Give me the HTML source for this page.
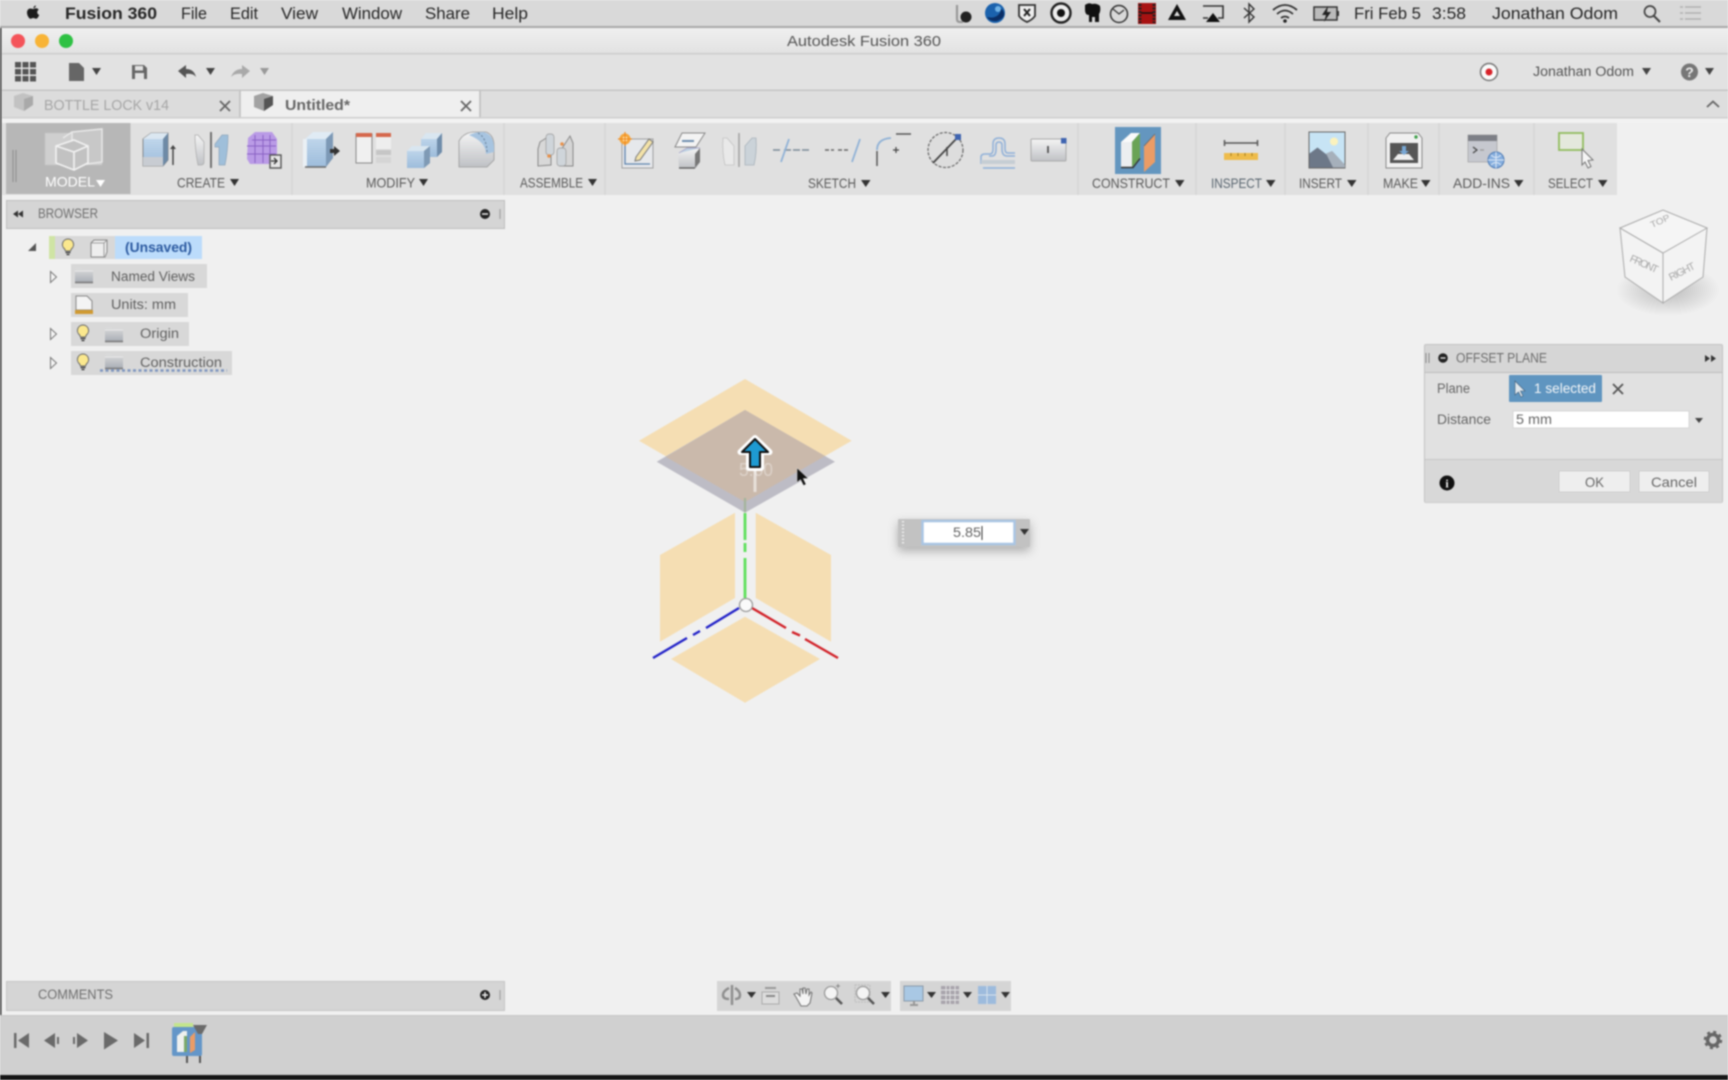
<!DOCTYPE html>
<html><head><meta charset="utf-8"><title>Autodesk Fusion 360</title>
<style>
html,body{margin:0;padding:0;background:#f0f0f0;width:1728px;height:1080px;overflow:hidden}
svg{display:block;position:absolute;left:0;top:0;filter:blur(.7px);font-family:"Liberation Sans",sans-serif}
</style></head><body>
<svg width="1728" height="1080" viewBox="0 0 1728 1080" xmlns="http://www.w3.org/2000/svg">
<defs>
<linearGradient id="bl" x1="0" y1="0" x2="0" y2="1"><stop offset="0" stop-color="#c6dbee"/><stop offset="1" stop-color="#9dbcdb"/></linearGradient>
<linearGradient id="gr" x1="0" y1="0" x2="0" y2="1"><stop offset="0" stop-color="#f4f4f4"/><stop offset="1" stop-color="#bfc1c5"/></linearGradient>
<linearGradient id="fg" x1="0" y1="0" x2="0" y2="1"><stop offset="0" stop-color="#dcdcdc"/><stop offset="1" stop-color="#a6abb3"/></linearGradient>
<linearGradient id="tb" x1="0" y1="0" x2="0" y2="1"><stop offset="0" stop-color="#efefef"/><stop offset="1" stop-color="#e2e2e2"/></linearGradient>
<radialGradient id="cs"><stop offset="0" stop-color="#000" stop-opacity=".22"/><stop offset="1" stop-color="#000" stop-opacity="0"/></radialGradient>
<filter id="sh" x="-20%" y="-30%" width="140%" height="180%"><feDropShadow dx="0" dy="4" stdDeviation="5" flood-color="#000" flood-opacity=".28"/></filter>
<g id="bulb"><path d="M0-8a5.500 5.500 0 0 1 3.500 9.800L2.500 4h-5l-1-2.200A5.500 5.500 0 0 1 0-8z" fill="#fbe88e" stroke="#666" stroke-width="1"/><path d="M-2.500 5.500h5M-1.500 7.500h3" stroke="#333" stroke-width="1.300"/></g>
<g id="fold"><path d="M0 2h7l2 2h9v13H0z" fill="url(#fg)"/><path d="M0 16.500h18" stroke="#777" stroke-width="1.500"/><path d="M0 5h18" stroke="#f2f2f2" stroke-width=".8"/></g>
</defs>

<!-- window base -->
<rect width="1728" height="1080" fill="#f0f0f0"/>
<rect x="0" y="0" width="1.500" height="1080" fill="#333"/>
<!-- menu bar -->
<rect width="1728" height="27" fill="#d9d9d9"/>
<rect y="26" width="1728" height="2" fill="#a9a9a9"/>
<path d="M36 5.500c-.3 1.500-1.300 2.600-2.700 2.700.1-1.400 1.200-2.500 2.700-2.700zM33 9c1 0 1.700-.7 3-.7 1.100 0 2.100.6 2.700 1.500-2.200 1.300-1.800 4.300.5 5.200-.7 1.700-1.800 3.700-3.100 3.700-1.100 0-1.500-.7-2.800-.7s-1.800.7-2.800.7c-1.500 0-3.500-3.400-3.500-6.100 0-2.700 1.800-4.100 3.400-4.100 1 0 1.900.5 2.600.5z" fill="#1c1c1c"/>
<g fill="#262626" font-size="17">
<text x="65" y="19" font-weight="700" textLength="92" lengthAdjust="spacingAndGlyphs">Fusion 360</text>
<text x="181" y="19" textLength="26" lengthAdjust="spacingAndGlyphs">File</text>
<text x="230" y="19" textLength="28" lengthAdjust="spacingAndGlyphs">Edit</text>
<text x="281" y="19" textLength="37" lengthAdjust="spacingAndGlyphs">View</text>
<text x="342" y="19" textLength="60" lengthAdjust="spacingAndGlyphs">Window</text>
<text x="425" y="19" textLength="45" lengthAdjust="spacingAndGlyphs">Share</text>
<text x="492" y="19" textLength="36" lengthAdjust="spacingAndGlyphs">Help</text>
<text x="1354" y="19" textLength="67" lengthAdjust="spacingAndGlyphs">Fri Feb 5</text>
<text x="1432" y="19" textLength="34" lengthAdjust="spacingAndGlyphs">3:58</text>
<text x="1492" y="19" textLength="126" lengthAdjust="spacingAndGlyphs">Jonathan Odom</text>
</g>
<!-- status icons -->
<path d="M957 5v14q0 3 3 3h3" fill="none" stroke="#999" stroke-width="2.200"/><circle cx="966" cy="17" r="5.500" fill="#222"/>
<circle cx="995" cy="13" r="10" fill="#1b62ad"/><path d="M987 17q8 2 12-3t-3-7q7 1 8 6t-7 8q-7 1-10-4z" fill="#0b2f66"/><circle cx="998" cy="9" r="3" fill="#6fb2e6"/>
<path d="M1019 5h16v11q-3 4-8 6-5-2-8-6z" fill="#eee" stroke="#333" stroke-width="1.800"/><path d="M1024 9l6 7m0-7l-6 7" stroke="#222" stroke-width="2"/>
<circle cx="1061" cy="13" r="9.500" fill="#eee" stroke="#222" stroke-width="2.400"/><circle cx="1061" cy="13" r="4" fill="#111"/>
<path d="M1085 5q4-3 7-1 5-1 8 2 1 5-1 8v8h-4v-5h-3v5h-3v-7q-4 0-4-5z" fill="#111"/>
<circle cx="1119" cy="14" r="8.500" fill="none" stroke="#333" stroke-width="1.500"/><path d="M1113 9l6 5 5-4" fill="none" stroke="#333" stroke-width="1.200"/>
<rect x="1138" y="3" width="18" height="21" fill="#a81212"/><path d="M1140 4v19M1154 4v19" stroke="#222" stroke-width="3" stroke-dasharray="2 1.500"/><path d="M1141 13h12" stroke="#111" stroke-width="1.500"/>
<path d="M1177 4l9 16h-18z" fill="#111"/><path d="M1177 11l3 5h-6z" fill="#ddd"/>
<path d="M1203 6h20v12h-5m-10 0h-5z" fill="none" stroke="#333" stroke-width="1.600"/><path d="M1213 13l7 9h-14z" fill="#111"/>
<path d="M1244 8l10 9-5 5V4l5 5-10 9" fill="none" stroke="#333" stroke-width="1.400"/>
<g fill="none" stroke="#333" stroke-width="1.800"><path d="M1273 10q12-10 24 0"/><path d="M1277 14q8-7 16 0"/><path d="M1281 18q4-3 8 0"/></g><circle cx="1285" cy="21" r="1.800" fill="#222"/>
<rect x="1314" y="7" width="23" height="13" fill="#bbb" stroke="#333" stroke-width="1.500"/><path d="M1338 11v5" stroke="#333" stroke-width="2"/><path d="M1328 6l-6 9h4l-2 7 7-10h-4z" fill="#222"/>
<circle cx="1650" cy="11.500" r="5.500" fill="none" stroke="#444" stroke-width="1.700"/><path d="M1654 16l6 6" stroke="#444" stroke-width="2"/>
<g stroke="#b5b5b5" stroke-width="1.800"><path d="M1685 7h16M1685 13h16M1685 19h16M1680 7h3M1680 13h3M1680 19h3"/></g>

<!-- title bar -->
<rect x="2" y="28" width="1726" height="25" fill="url(#tb)"/>
<rect x="2" y="53" width="1726" height="1.500" fill="#cdcdcd"/>
<circle cx="18" cy="41" r="7" fill="#f4545a"/><circle cx="42" cy="41" r="7" fill="#f8b437"/><circle cx="66" cy="41" r="7" fill="#2ec143"/>
<text x="787" y="46" font-size="15" fill="#555" textLength="154" lengthAdjust="spacingAndGlyphs">Autodesk Fusion 360</text>

<!-- toolbar -->
<rect x="2" y="54.500" width="1726" height="35.500" fill="#e2e2e2"/>
<rect x="2" y="89.500" width="1726" height="1.500" fill="#c4c4c4"/>
<g fill="#555"><rect x="15" y="62" width="6" height="5.500"/><rect x="22.500" y="62" width="6" height="5.500"/><rect x="30" y="62" width="6" height="5.500"/><rect x="15" y="69" width="6" height="5.500"/><rect x="22.500" y="69" width="6" height="5.500"/><rect x="30" y="69" width="6" height="5.500"/><rect x="15" y="76" width="6" height="5.500"/><rect x="22.500" y="76" width="6" height="5.500"/><rect x="30" y="76" width="6" height="5.500"/></g>
<path d="M69 63h10l5 5v13H69z" fill="#666"/><path d="M92 68h9l-4.500 7z" fill="#444"/>
<path d="M132 65h12l3 3v11h-15z" fill="#666"/><rect x="135" y="66" width="8" height="4.500" fill="#e2e2e2"/><rect x="135" y="73" width="9" height="6" fill="#e2e2e2"/>
<path d="M178 71l8-6v4q8 0 10 8-3-4-10-3v4z" fill="#555"/><path d="M206 68h9l-4.500 7z" fill="#444"/>
<path d="M250 71l-8-6v4q-8 0-11 8 4-4 11-3v4z" fill="#a9a9a9"/><path d="M260 68h9l-4.500 7z" fill="#999"/>
<circle cx="1489" cy="72" r="8.500" fill="#fafafa" stroke="#777" stroke-width="1.500"/><circle cx="1489" cy="72" r="3.500" fill="#d8232a"/>
<text x="1533" y="76" font-size="13.500" fill="#555" textLength="101" lengthAdjust="spacingAndGlyphs">Jonathan Odom</text>
<path d="M1642 68h9l-4.500 7z" fill="#444"/>
<circle cx="1689.500" cy="72" r="8.500" fill="#777"/><text x="1689.500" y="77" font-size="14" font-weight="700" fill="#eee" text-anchor="middle">?</text>
<path d="M1705 68h9l-4.500 7z" fill="#444"/>

<!-- tab row -->
<rect x="2" y="91" width="1726" height="26" fill="#dedede"/>
<rect x="2" y="91" width="238" height="26" fill="#dcdcdc"/>
<rect x="240" y="91" width="240" height="26" fill="#efefef"/>
<path d="M240 91v26M480 91v26" stroke="#bdbdbd" stroke-width="1.500"/>
<path d="M14 96l9-3 10 3v9l-9 6-10-4z" fill="#c2c2c2"/><path d="M24 99l9-3v9l-9 6z" fill="#a9a9a9"/>
<path d="M254 96l9-3 10 3v9l-9 6-10-4z" fill="#a2a2a2"/><path d="M264 99l9-3v9l-9 6z" fill="#555"/>
<text x="44" y="110" font-size="15" fill="#a6a6a6" textLength="125" lengthAdjust="spacingAndGlyphs">BOTTLE LOCK v14</text>
<text x="285" y="110" font-size="15" fill="#666" font-weight="700" textLength="65" lengthAdjust="spacingAndGlyphs">Untitled*</text>
<path d="M220 101l10 10m0-10l-10 10" stroke="#666" stroke-width="1.800"/>
<path d="M461 101l10 10m0-10l-10 10" stroke="#666" stroke-width="1.800"/>
<path d="M1707 107l6-5.500 6 5.500" fill="none" stroke="#666" stroke-width="1.800"/>
<rect x="2" y="117" width="1726" height="1.500" fill="#cfcfcf"/>
<rect x="2" y="118.500" width="1726" height="4.500" fill="#f2f2f2"/>

<!-- ribbon -->
<rect x="2" y="123" width="1615" height="72" fill="#e0e0e0"/>
<rect x="6" y="123" width="124.500" height="71" fill="#b7b7b7"/>
<path d="M13 150v32M16 150v32" stroke="#8c8c8c" stroke-width="1"/>
<path d="M292 123v72M504 123v72M605 123v72M1078 123v72M1196 123v72M1285 123v72M1368 123v72M1439 123v72M1534 123v72" stroke="#d3d3d3" stroke-width="1.200"/>
<!-- model -->
<path d="M45 133h57v32H45z" fill="#cfcfcf"/>
<path d="M72 132l30-3v33l-30 4zM72 132l-9 6" fill="#c8c8c8" stroke="#e8e8e8" stroke-width="1.500"/>
<path d="M56 146l18-6 14 6v17l-14 7-18-7z" fill="#c2c2c2" stroke="#f2f2f2" stroke-width="1.600"/><path d="M56 146l18 6 14-6M74 152v18" fill="none" stroke="#f2f2f2" stroke-width="1.600"/>
<text x="45" y="186.500" font-size="14" fill="#fff" textLength="50" lengthAdjust="spacingAndGlyphs">MODEL</text><path d="M96 180h9l-4.500 7z" fill="#fff"/>

<!-- create icons -->
<path d="M143 139l8-6h17v27l-5 6h-20z" fill="url(#bl)" stroke="#777" stroke-width=".8"/><path d="M143 139h20l5-6h-17z" fill="#dbe7f1"/><path d="M163 139v27l5-6v-27z" fill="#6e8aa6"/><rect x="143" y="157" width="20" height="9" fill="#c8ccd2"/>
<path d="M173 147v18" stroke="#444" stroke-width="1.500"/><path d="M170 149l3-4 3 4z" fill="#444"/>
<path d="M195 135h3l6 7v20q0 3-3 3h-3q-3-15-3-30z" fill="url(#gr)" stroke="#aaa" stroke-width=".7"/>
<path d="M211 132v36" stroke="#666" stroke-width="1.800"/>
<path d="M228 135h-6l-7 9v3h4v18h6q3-15 3-30z" fill="#9fbfda" stroke="#8ea5bb" stroke-width=".7"/>
<path d="M248 138l7-6h17l5 7v20l-5 5h-22l-3-5z" fill="#ba9be6"/><path d="M247 146h29M247 154h29M255 135v28M263 135v28M270 135v28M252 140h24" stroke="#8a62c4" stroke-width="1"/>
<rect x="270" y="155" width="11" height="13" fill="#e6e6e6" stroke="#555" stroke-width="1.400"/><path d="M271 161h5m-2-3l3 3-3 3" fill="none" stroke="#333" stroke-width="1.300"/>
<text x="177" y="187.500" font-size="14" fill="#5a5a5a" textLength="48" lengthAdjust="spacingAndGlyphs">CREATE</text><path d="M230 179h9l-4.500 7z" fill="#333"/>
<!-- modify -->
<path d="M305 139l8-7h20v25l-7 10h-21z" fill="url(#bl)"/><path d="M305 139h21l7-7h-20z" fill="#e0ebf4"/><path d="M326 139v28l7-9v-26z" fill="#7d99b6"/><path d="M305 139v28" stroke="#eaf0f5" stroke-width="4"/><path d="M305 167h21" stroke="#666" stroke-width="1.500"/>
<path d="M330 149h4v-3l6 5-6 5v-3h-4z" fill="#333"/>
<rect x="356" y="134" width="16" height="29" fill="#f0f0f0" stroke="#888" stroke-width="1"/><rect x="356" y="133" width="16" height="4" fill="#d5684c"/>
<rect x="376" y="134" width="15" height="15" fill="#eee"/><rect x="376" y="133" width="15" height="4" fill="#d5684c"/><rect x="376" y="150" width="15" height="5" fill="#c6c6c6"/><rect x="376" y="157" width="15" height="6" fill="#d5d5d5"/>
<path d="M421 139l5-6h16v19l-5 5h-16z" fill="url(#bl)"/><path d="M421 139h16l5-6h-16z" fill="#d9e6f0"/><path d="M437 139v18l5-5v-19z" fill="#6f8caa"/>
<path d="M407 151l5-5h18v17l-6 5h-17z" fill="url(#bl)"/><path d="M407 151h17l6-5h-18z" fill="#d9e6f0"/><path d="M424 151v17l6-5v-17z" fill="#7f9ab5"/>
<path d="M459 141q5-9 16-9h11q8 3 8 14v14l-7 7h-28v-26z" fill="url(#gr)" stroke="#9a9a9a" stroke-width=".8"/>
<path d="M469 135q6-3 14-3 10 2 11 14v6l-8 2q0-12-17-19z" fill="#a7c4e0"/><path d="M478 133q9 5 9 20" fill="none" stroke="#667e97" stroke-width="1" stroke-dasharray="2 2"/>
<text x="366" y="187.500" font-size="14" fill="#5a5a5a" textLength="49" lengthAdjust="spacingAndGlyphs">MODIFY</text><path d="M419 179h9l-4.500 7z" fill="#333"/>
<!-- assemble -->
<path d="M540 142l11-7v30l-13 1v-17z" fill="#d8d8d8" stroke="#888" stroke-width="1"/><rect x="546" y="134" width="8" height="21" rx="3" fill="#cfd5da" stroke="#999" stroke-width=".7"/>
<path d="M561 150l9-14 3 7v23h-13z" fill="#d5d5d5" stroke="#888" stroke-width="1"/><rect x="557" y="148" width="9" height="18" rx="3" fill="#cfd5da" stroke="#999" stroke-width=".7"/>
<circle cx="549" cy="156" r="1.800" fill="#e8914a"/><circle cx="562" cy="144" r="1.800" fill="#e8914a"/>
<text x="520" y="187.500" font-size="14" fill="#5a5a5a" textLength="63" lengthAdjust="spacingAndGlyphs">ASSEMBLE</text><path d="M588 179h9l-4.500 7z" fill="#333"/>
<!-- sketch -->
<rect x="622" y="139" width="31" height="29" fill="#e6e8eb" stroke="#a0a0a0" stroke-width="1"/><path d="M625 143v21h25" fill="none" stroke="#5c82ad" stroke-width="1.300"/>
<circle cx="625" cy="139" r="5.500" fill="#f6a53a"/><circle cx="625" cy="139" r="2.500" fill="#fff3c8"/><path d="M625 132v14M618 139h14" stroke="#f08a1f" stroke-width="1.200"/>
<path d="M636 157l13-18 4 3-13 18-5 1z" fill="#f3e2a8" stroke="#777" stroke-width="1"/>
<path d="M675 147l7-14h23l-9 14z" fill="#f3f3f3" stroke="#888" stroke-width="1"/><path d="M682 141h12" stroke="#6e8eae" stroke-width="2"/>
<path d="M678 154l8-6h14v14l-4 6h-17z" fill="url(#gr)"/><path d="M679 153l8-5h13" fill="#bcd1e3" stroke="#aac"/><path d="M695 154v14l5-6v-14z" fill="#777"/><path d="M679 168h16" stroke="#555" stroke-width="1.300"/>
<path d="M723 138h4l7 8v19h-9q-3-13-2-27z" fill="#e9e9e9" stroke="#c2c2c2" stroke-width=".8"/><path d="M739 133v34" stroke="#a4a4a4" stroke-width="1.600"/><path d="M756 138h-4l-7 8v19h9q3-13 2-27z" fill="#cbd3d9" stroke="#a9b3bb" stroke-width=".8"/>
<path d="M773 150h7M784 150h26" stroke="#7b8a97" stroke-width="1.400" stroke-dasharray="7 2"/><path d="M781 162l8-23" stroke="#8fb1d6" stroke-width="1.800"/>
<path d="M825 150h9M838 150h11" stroke="#666" stroke-width="1.400" stroke-dasharray="4 2"/><path d="M852 162l8-23" stroke="#8fb1d6" stroke-width="1.800"/>
<path d="M877 166v-15" stroke="#555" stroke-width="1.500"/><path d="M877 150q0-11 14-12" fill="none" stroke="#8fb1d6" stroke-width="1.800"/><path d="M896 134h15" stroke="#555" stroke-width="1.500"/><path d="M893 150h6M896 147v6" stroke="#444" stroke-width="1.200"/>
<circle cx="945.500" cy="150" r="17.500" fill="#ddd" stroke="#666" stroke-width="1.200" stroke-dasharray="3 1.500"/><path d="M933 163l25-26" stroke="#444" stroke-width="1.800"/><path d="M947 147v9" stroke="#444" stroke-width="1.500"/><rect x="955" y="134" width="6" height="6" fill="#3f64b0"/>
<path d="M981 164v-7q0-3 4-3h5q3 0 3-5v-5q0-6 6-6t6 6v5q0 4 3 4h7M983 168h32M989 156h3q4 0 4-7v-4q0-3 3-3t3 3v4q0 7 5 7h8" fill="none" stroke="#8fb0d8" stroke-width="1.500"/><path d="M981 160h34v4h-34z" fill="#c6cdd4"/>
<rect x="1031" y="139" width="35" height="22" rx="1" fill="url(#gr)" stroke="#aaa" stroke-width="1"/><path d="M1048 146v7" stroke="#444" stroke-width="1.600"/><rect x="1061" y="138" width="5.500" height="5.500" fill="#3f64b0"/>
<text x="808" y="188" font-size="14" fill="#5a5a5a" textLength="48" lengthAdjust="spacingAndGlyphs">SKETCH</text><path d="M861 180h9.500l-4.750 7z" fill="#333"/>
<!-- construct -->
<rect x="1115" y="127" width="46" height="47" fill="#6496bf"/>
<path d="M1121 142v25h11v-25z" fill="#eceef0"/><path d="M1121 142l10-9h9l-8 9z" fill="#fafafa"/><path d="M1132 142l8-9v25l-8 9z" fill="#6aa356"/><path d="M1121 167.500h12l7-9" fill="none" stroke="#333" stroke-width="1.400"/>
<path d="M1144 146l11-12v28l-11 10z" fill="#eb9c66"/><path d="M1144 146l11-12" stroke="#666" stroke-width=".8"/>
<text x="1092" y="188" font-size="14" fill="#5a5a5a" textLength="78" lengthAdjust="spacingAndGlyphs">CONSTRUCT</text><path d="M1175 180h9.500l-4.750 7z" fill="#333"/>
<!-- inspect -->
<path d="M1224 143h34M1224.500 140v6M1257.500 140v6" stroke="#555" stroke-width="1.500"/>
<rect x="1224" y="153" width="34" height="7" fill="#eebc4b"/><path d="M1231 153v3M1238 153v3M1245 153v3M1252 153v3" stroke="#a27e20"/>
<text x="1211" y="188" font-size="14" fill="#5a6670" textLength="51" lengthAdjust="spacingAndGlyphs">INSPECT</text><path d="M1266 180h9.500l-4.750 7z" fill="#333"/>
<!-- insert -->
<rect x="1309" y="132" width="36" height="36" fill="#c7e4f5" stroke="#666" stroke-width="1"/><circle cx="1334" cy="141.500" r="4" fill="#fbf2bd"/>
<path d="M1309.500 167.500v-14l8-6 9 7 6-3 12 13v3z" fill="#6d7888"/><path d="M1332 151l13 14v2.500h-12l-7-14z" fill="#a6b0bb"/>
<text x="1299" y="188" font-size="14" fill="#5a5a5a" textLength="43" lengthAdjust="spacingAndGlyphs">INSERT</text><path d="M1347 180h9.500l-4.750 7z" fill="#333"/>
<!-- make -->
<path d="M1386 138l4-5h28l4 5v30h-36z" fill="#f0f0f0" stroke="#888" stroke-width="1"/><rect x="1390" y="143" width="28" height="20" fill="#555"/><path d="M1393 160l5-6h11l5 6z" fill="#eee"/><path d="M1402 146h4v5h3l-5 4-5-4h3z" fill="#78a7d4"/><circle cx="1416" cy="137" r="1.700" fill="#3f9f4a"/>
<text x="1383" y="188" font-size="14" fill="#5a5a5a" textLength="35" lengthAdjust="spacingAndGlyphs">MAKE</text><path d="M1421 180h9.500l-4.750 7z" fill="#333"/>
<!-- add-ins -->
<rect x="1468" y="135" width="29" height="27" fill="#c6c8cf" stroke="#999" stroke-width=".6"/><rect x="1468" y="135" width="29" height="6" fill="#7d7f86"/><path d="M1473 147l4 3-4 3" fill="none" stroke="#444" stroke-width="1.200"/><path d="M1480 150h4" stroke="#999" stroke-width="1.300"/>
<circle cx="1496" cy="160" r="8" fill="#86aede" stroke="#4f7cb5" stroke-width="1"/><path d="M1496 152v16M1488 160h16M1491 155q5 5 10 0M1491 165q5-5 10 0" stroke="#dee9f6" fill="none" stroke-width="1"/>
<text x="1453" y="188" font-size="14" fill="#5a5a5a" textLength="57" lengthAdjust="spacingAndGlyphs">ADD-INS</text><path d="M1514 180h9.500l-4.750 7z" fill="#333"/>
<!-- select -->
<rect x="1559" y="133" width="24" height="17" fill="#e4e8dc" stroke="#92bc5f" stroke-width="1.800"/>
<path d="M1582 149l11 11-5 .5 3 6-3 1.500-3-6-3 3z" fill="#f5f5f5" stroke="#777" stroke-width="1"/>
<text x="1548" y="188" font-size="14" fill="#5a5a5a" textLength="45" lengthAdjust="spacingAndGlyphs">SELECT</text><path d="M1598 180h9.500l-4.750 7z" fill="#333"/>

<!-- view cube -->
<ellipse cx="1668" cy="290" rx="52" ry="26" fill="url(#cs)"/>
<path d="M1663 210l44 18-4 49-40 26-38-26-5-49z" fill="#f3f3f3"/>
<path d="M1620 228l43-18 44 18-44 25z" fill="#f5f5f5" stroke="#aaa" stroke-width="1"/>
<path d="M1620 228l5 49 38 26v-50zM1707 228l-4 49-40 26" fill="none" stroke="#aaa" stroke-width="1"/>
<g fill="#a8a8a8" font-size="10.500">
<text transform="translate(1652 228) rotate(-24) scale(1 .9)" font-size="10">TOP</text>
<text transform="translate(1629 261) rotate(24)" textLength="30">FRONT</text>
<text transform="translate(1671 281) rotate(-27)" textLength="28">RIGHT</text>
</g>

<!-- browser -->
<rect x="6.500" y="200.500" width="498" height="28" fill="#d5d5d5" stroke="#bebebe"/>
<path d="M13 214l5-3.500v7zM18 214l5-3.500v7z" fill="#333"/>
<text x="38" y="218" font-size="13.500" fill="#6f6f6f" textLength="60" lengthAdjust="spacingAndGlyphs">BROWSER</text>
<circle cx="485" cy="214" r="5" fill="#222"/><path d="M482 214h6" stroke="#eee" stroke-width="1.500"/><path d="M500 209v10" stroke="#aaa" stroke-width="1.500"/>
<path d="M28 251h8v-8z" fill="#555"/>
<rect x="49" y="236" width="6" height="23" fill="#cfe4a4"/><rect x="55" y="236" width="60" height="23" fill="#d8d8d8"/><rect x="115" y="236" width="87" height="23" fill="#bcdcfb"/>
<use href="#bulb" x="68" y="247"/>
<path d="M91 243l3-3h13v12l-2 5H91z" fill="#eee" stroke="#888" stroke-width="1"/><path d="M104 243v14M91 243h13l3-3" fill="none" stroke="#888" stroke-width=".8"/>
<text x="125" y="252" font-size="13.500" font-weight="700" fill="#2c5aa0" textLength="67" lengthAdjust="spacingAndGlyphs">(Unsaved)</text>
<rect x="71" y="264" width="136" height="24" fill="#d8d8d8"/>
<rect x="71" y="293" width="117" height="24" fill="#d8d8d8"/>
<rect x="71" y="322" width="118" height="24" fill="#d8d8d8"/>
<rect x="71" y="351" width="161" height="24" fill="#d8d8d8"/>
<g fill="#f4f4f4" stroke="#777" stroke-width="1"><path d="M50.500 271.500l6 5.500-6 5.500z"/><path d="M50.500 328.500l6 5.500-6 5.500z"/><path d="M50.500 357.500l6 5.500-6 5.500z"/></g>
<use href="#fold" x="75" y="266"/>
<path d="M76 296h11l5 5v9H76z" fill="#f4f4f4" stroke="#888"/><rect x="75" y="310" width="18" height="4" fill="#d09a32"/>
<use href="#bulb" x="83" y="333"/><use href="#fold" x="105" y="325"/>
<use href="#bulb" x="83" y="362"/><use href="#fold" x="105" y="352"/>
<path d="M100 370.500h127" stroke="#7e96bf" stroke-width="2.600" stroke-dasharray="3 2.500"/>
<g font-size="13.500" fill="#606060">
<text x="111" y="281" textLength="84" lengthAdjust="spacingAndGlyphs">Named Views</text>
<text x="111" y="309" textLength="65" lengthAdjust="spacingAndGlyphs">Units: mm</text>
<text x="140" y="338" textLength="39" lengthAdjust="spacingAndGlyphs">Origin</text>
<text x="140" y="367" textLength="82" lengthAdjust="spacingAndGlyphs">Construction</text>
</g>

<!-- planes -->
<path d="M745 379l106.700 61.700L745 502l-106-61.300z" fill="#f5deb3"/>
<path d="M745 410l90 51.700-90 51-88.300-51z" fill="#bdbcc5"/>
<path d="M745 410l80 46-80 46-79-45z" fill="#cab9ab"/>
<path d="M735 512.700V598l-75 43.700V555z" fill="#f5deb3"/>
<path d="M755.700 512.700L831 555v86.700L755.700 598z" fill="#f5deb3"/>
<path d="M745 616.700L820 659l-75 43.700L671 659z" fill="#f5deb3"/>
<!-- axes -->
<path d="M745 498v14" stroke="#a3b59d" stroke-width="2.200"/>
<path d="M745 513v27M745 543v9M745 558v40" stroke="#5fe05c" stroke-width="2.800"/>
<path d="M739 608l-33 20M700 631l-7 4M687 638l-34 20" stroke="#2323c8" stroke-width="2.400" fill="none"/>
<path d="M752 608l34 20M792 632l8 3.500M805 639l33 19" stroke="#d2232a" stroke-width="2.400" fill="none"/>
<circle cx="746" cy="605" r="6.500" fill="#fafafa" stroke="#999" stroke-width="1.300"/>
<!-- ghost dimension -->
<text x="739" y="476" font-size="18" fill="#fff" opacity=".35" textLength="34" lengthAdjust="spacingAndGlyphs">5.00</text>
<path d="M755 470v22" stroke="#fff" stroke-width="3" opacity=".55"/>
<!-- arrow manipulator -->
<path d="M755 438l14.500 14H761v16h-12v-16h-8.500z" fill="#fff" stroke="#fff" stroke-width="6" stroke-linejoin="round"/>
<path d="M755 439l13 13h-8v15h-10v-15h-8z" fill="#1e9ad2" stroke="#111" stroke-width="2" stroke-linejoin="round"/>
<!-- cursor -->
<path d="M797 468v14.500l3.500-3 3 6 2.500-1.200-2.800-5.800h5z" fill="#111" stroke="#ddd" stroke-width=".5"/>

<!-- dim input -->
<g filter="url(#sh)"><rect x="898" y="519" width="132" height="28" rx="1" fill="#c2c2c2"/></g>
<path d="M903 521v24" stroke="#eee" stroke-width="2" stroke-dasharray="1.500 2"/>
<rect x="922.500" y="521" width="92" height="23" fill="#fff" stroke="#a9c5e4" stroke-width="2.500"/>
<text x="953" y="537" font-size="14" fill="#666" textLength="28" lengthAdjust="spacingAndGlyphs">5.85</text>
<path d="M982 526v14" stroke="#333" stroke-width="1"/>
<path d="M1020 529h9l-4.500 6z" fill="#333"/>

<!-- offset plane panel -->
<rect x="1424.500" y="344.500" width="298" height="158" rx="1.500" fill="#e1e1e1" stroke="#c2c2c2"/>
<rect x="1425" y="345" width="297" height="27" fill="#d6d6d6"/><path d="M1425 372.500h297" stroke="#bdbdbd"/>
<rect x="1425" y="459.500" width="297" height="43" fill="#d8d8d8"/><path d="M1425 459.500h297" stroke="#c6c6c6"/>
<path d="M1426 353v10M1429 353v10" stroke="#888"/>
<circle cx="1443" cy="358" r="4.800" fill="#222"/><path d="M1440.500 358h5" stroke="#eee" stroke-width="1.300"/>
<text x="1456" y="362.500" font-size="13.500" fill="#6e6e6e" textLength="91" lengthAdjust="spacingAndGlyphs">OFFSET PLANE</text>
<path d="M1705 355l5 3.500-5 3.500zM1711 355l5 3.500-5 3.500z" fill="#333"/>
<text x="1437" y="393" font-size="13.500" fill="#666" textLength="33" lengthAdjust="spacingAndGlyphs">Plane</text>
<rect x="1509" y="375" width="93" height="27" rx="1" fill="#5f95c0"/>
<path d="M1515 381v14l3.500-3 2.500 5 2-1-2.500-5h4.500z" fill="#dfe6ec" stroke="#3e5c76" stroke-width=".6"/>
<text x="1534" y="393" font-size="13.500" fill="#f4f6f8" textLength="62" lengthAdjust="spacingAndGlyphs">1 selected</text>
<path d="M1613 384l10 10m0-10l-10 10" stroke="#555" stroke-width="1.800"/>
<text x="1437" y="424" font-size="13.500" fill="#666" textLength="54" lengthAdjust="spacingAndGlyphs">Distance</text>
<rect x="1513" y="411" width="176" height="17" fill="#fff" stroke="#d0d0d0" stroke-width=".8"/>
<text x="1516" y="424" font-size="13.500" fill="#666" textLength="36" lengthAdjust="spacingAndGlyphs">5 mm</text>
<path d="M1695 418h8l-4 5z" fill="#444"/>
<circle cx="1447" cy="483" r="7.500" fill="#111"/><text x="1447" y="487.500" font-size="12" font-weight="700" fill="#eee" text-anchor="middle" font-family="Liberation Serif">i</text>
<rect x="1559" y="471" width="71" height="21" fill="#eee" stroke="#d0d0d0"/><text x="1585" y="487" font-size="14" fill="#666" textLength="19" lengthAdjust="spacingAndGlyphs">OK</text>
<rect x="1639" y="471" width="70" height="21" fill="#eee" stroke="#d0d0d0"/><text x="1651" y="487" font-size="14" fill="#666" textLength="46" lengthAdjust="spacingAndGlyphs">Cancel</text>

<!-- comments -->
<rect x="6.500" y="981.500" width="498" height="29" fill="#d5d5d5" stroke="#c4c4c4"/>
<text x="38" y="999" font-size="13.500" fill="#707070" textLength="75" lengthAdjust="spacingAndGlyphs">COMMENTS</text>
<circle cx="485" cy="995" r="5" fill="#222"/><path d="M482 995h6M485 992v6" stroke="#eee" stroke-width="1.400"/><path d="M500 990v10" stroke="#aaa" stroke-width="1.500"/>

<!-- nav bar -->
<rect x="717" y="981" width="174" height="30" fill="#d5d5d5"/><rect x="900" y="981" width="111" height="30" fill="#d5d5d5"/>
<path d="M729 988q-6 3-6 7t6 4M735 988q5 3 5 7t-5 4M732 985v20" fill="none" stroke="#8f8f8f" stroke-width="2.500"/>
<path d="M747 992h9l-4.500 6z" fill="#333"/>
<rect x="762" y="992" width="17" height="12" fill="#dcdcdc" stroke="#aaa"/><path d="M766 996h9" stroke="#888" stroke-width="2"/><path d="M765 988h11" stroke="#999" stroke-width="2"/>
<path d="M796 997l-2-3 3-1 3 3v-7h2l1 5v-6h2l1 6 1-5h2l0 6 2-3 1 1-2 10-3 3h-6z" fill="#f4f4f4" stroke="#777" stroke-width="1.100"/>
<circle cx="831" cy="993" r="6.500" fill="#f4f4f4" stroke="#999" stroke-width="1.300"/><path d="M836 998l6 6" stroke="#555" stroke-width="2.500"/><path d="M838 984v4M836 986h4" stroke="#888"/>
<rect x="855" y="985" width="15" height="17" fill="none" stroke="#bbb" stroke-dasharray="2 1"/><circle cx="863" cy="993" r="6.500" fill="#f4f4f4" stroke="#999" stroke-width="1.300"/><path d="M868 998l6 6" stroke="#555" stroke-width="2.500"/>
<path d="M881 992h9l-4.500 6z" fill="#333"/>
<rect x="904" y="986" width="19" height="15" fill="#a9c8e4" stroke="#8a9aaa"/><path d="M910 1005h8M914 1001v4" stroke="#999" stroke-width="2"/>
<path d="M927 992h9l-4.500 6z" fill="#333"/>
<rect x="941" y="986" width="18" height="18" fill="#a8a4ac"/><path d="M941 990h18M941 995h18M941 1000h18M946 986v18M950 986v18M955 986v18" stroke="#e4e4e4" stroke-width=".9"/>
<path d="M963 992h9l-4.500 6z" fill="#333"/>
<rect x="978" y="986" width="18" height="18" fill="#9dbbdd"/><path d="M987 986v18M978 995h18" stroke="#d8e2ec" stroke-width="1"/>
<path d="M1001 992h9l-4.500 6z" fill="#333"/>

<!-- timeline -->
<rect x="0" y="1016" width="1728" height="60" fill="#d0d0d0"/>
<rect x="0" y="1015" width="1728" height="1.200" fill="#c9c9c9"/>
<rect x="0" y="1075" width="1728" height="5" fill="#151515"/>
<g fill="#6a6a6a">
<path d="M14 1033h2.500v15H14zM29 1033v15l-11-7.500z"/>
<path d="M55 1033v15l-11-7.500zM57 1037h2v7h-2z"/>
<path d="M73 1037h2v7h-2zM77 1033l11 7.500-11 7.500z"/>
<path d="M104 1032l14 8.500-14 9z"/>
<path d="M134 1033l11 7.500-11 7.500zM146.500 1033h2.500v15h-2.500z"/>
</g>
<rect x="174" y="1023" width="19" height="4" fill="#c4e58c"/>
<path d="M187 1056v7M200 1027v36" stroke="#555" stroke-width="2"/>
<rect x="172" y="1027" width="30" height="29" rx="2" fill="#6496c8"/>
<path d="M177 1036l6-5h4v21h-10z" fill="#eef0ee"/><path d="M184 1036h3v16h-3z" fill="#7aa86a"/><path d="M190 1037l5-5v18l-5 3z" fill="#ea9c66"/>
<path d="M193 1025h14l-5 9h-4z" fill="#6a6a6a"/>
<g transform="translate(1713 1040)"><circle r="5.500" fill="none" stroke="#666" stroke-width="3.500"/><circle r="8" fill="none" stroke="#666" stroke-width="2.500" stroke-dasharray="3 3.280"/></g>
</svg>
</body></html>
